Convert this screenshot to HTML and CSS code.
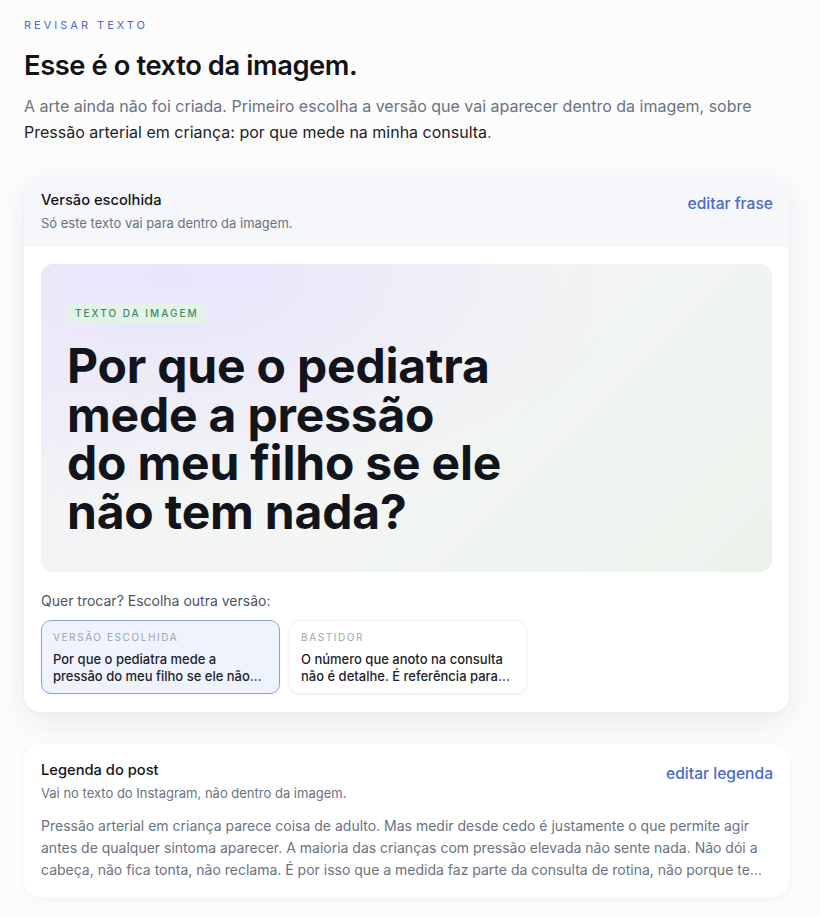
FILE: index.html
```html
<!DOCTYPE html>
<html lang="pt-BR">
<head>
  <meta charset="UTF-8">
  <title>Revisar texto</title>
  <link rel="stylesheet" href="styles.css">
</head>
<body>

<main class="page">
  <div class="eyebrow">REVISAR TEXTO</div>
  <h1>Esse é o texto da imagem.</h1>
  <p class="intro">A arte ainda não foi criada. Primeiro escolha a versão que vai aparecer dentro da imagem, sobre <span class="topic">Pressão arterial em criança: por que mede na minha consulta</span>.</p>

  <section class="card card-main">
    <div class="card-head">
      <div>
        <div class="card-title">Versão escolhida</div>
        <div class="card-sub">Só este texto vai para dentro da imagem.</div>
      </div>
      <a class="edit-link" href="#">editar frase</a>
    </div>

    <div class="card-body">
      <div class="preview">
        <span class="chip">TEXTO DA IMAGEM</span>
        <div class="preview-text">Por que o pediatra<br>mede a pressão<br>do meu filho se ele<br>não tem nada?</div>
      </div>

      <div class="switch-label">Quer trocar? Escolha outra versão:</div>
      <div class="options">
        <div class="option selected">
          <div class="option-tag">VERSÃO ESCOLHIDA</div>
          <div class="option-text">Por que o pediatra mede a pressão do meu filho se ele não tem nada?</div>
        </div>
        <div class="option">
          <div class="option-tag">BASTIDOR</div>
          <div class="option-text">O número que anoto na consulta não é detalhe. É referência para acompanhar o crescimento.</div>
        </div>
      </div>
    </div>
  </section>

  <section class="card card-caption">
    <div class="caption-head">
      <div>
        <div class="card-title">Legenda do post</div>
        <div class="card-sub">Vai no texto do Instagram, não dentro da imagem.</div>
      </div>
      <a class="edit-link" href="#">editar legenda</a>
    </div>
    <p class="caption-text">Pressão arterial em criança parece coisa de adulto. Mas medir desde cedo é justamente o que permite agir antes de qualquer sintoma aparecer. A maioria das crianças com pressão elevada não sente nada. Não dói a cabeça, não fica tonta, não reclama. É por isso que a medida faz parte da consulta de rotina, não porque tem algo errado com o seu filho.</p>
  </section>
</main>

</body>
</html>
```

FILE: styles.css
```css
body {
  margin: 0;
  background: #fcfcfd;
  font-family: Inter, "Noto Sans", Arial, sans-serif;
  color: #111827;
}

.page {
  padding: 18px 24px 20px;
  max-width: 765px;
}

.eyebrow {
  font-size: 11px;
  letter-spacing: 3px;
  color: #4a6bc8;
  line-height: 14px;
}

h1 {
  margin: 16px 0 0;
  font-size: 27.3px;
  font-weight: 600;
  letter-spacing: -0.4px;
  line-height: 36px;
  color: #111318;
}

.intro {
  margin: 9px 0 0;
  font-size: 16px;
  line-height: 26px;
  color: #6b7280;
}

.topic {
  color: #1f2328;
}

/* Cards */
.card {
  background: #fff;
  border-radius: 16px;
}

.card-main {
  margin-top: 32px;
  overflow: hidden;
  box-shadow: 0 10px 30px rgba(30, 40, 70, 0.08), 0 1px 3px rgba(30, 40, 70, 0.04);
}

.card-head {
  background: #f6f7fa;
  padding: 14px 16px 16px 17px;
  display: flex;
  justify-content: space-between;
  align-items: flex-start;
}

.card-title {
  font-size: 14.7px;
  font-weight: 500;
  line-height: 18px;
  color: #111318;
}

.card-sub {
  margin-top: 6px;
  font-size: 13px;
  line-height: 16px;
  color: #6b7280;
}

.edit-link {
  font-size: 15.6px;
  font-weight: 500;
  color: #4a6bc8;
  text-decoration: none;
  margin-top: 3px;
}

.card-body {
  padding: 17px 17px 18px;
}

.preview {
  border-radius: 12px;
  padding: 37px 26px 36px;
  background:
    radial-gradient(ellipse at 18% 5%, rgba(233, 228, 252, 0.95) 0%, rgba(233, 228, 252, 0) 55%),
    linear-gradient(135deg, #f2f1f8 0%, #f3f6f3 50%, #edf2ed 100%);
}

.chip {
  display: inline-block;
  background: #e4f3e8;
  color: #3f8b5d;
  font-size: 10px;
  font-weight: 500;
  letter-spacing: 2px;
  line-height: 20px;
  padding: 0 8px;
  border-radius: 6px;
}

.preview-text {
  margin-top: 19px;
  font-size: 48px;
  font-weight: 700;
  line-height: 48.5px;
  letter-spacing: -0.2px;
  color: #12141b;
}

.switch-label {
  margin-top: 20px;
  font-size: 14px;
  line-height: 18px;
  color: #4b5563;
}

.options {
  margin-top: 10px;
  display: flex;
  gap: 9px;
}

.option {
  width: 238px;
  box-sizing: border-box;
  padding: 10px 11px 8px;
  border-radius: 10px;
  border: 1px solid #f1f2f5;
  box-shadow: 0 1px 3px rgba(30, 40, 70, 0.05);
  background: #fff;
}

.option.selected {
  width: 239px;
  background: #eef3fe;
  border-color: #8d9fe0;
}

.option-tag {
  font-size: 10px;
  letter-spacing: 1.6px;
  color: #9ca3af;
  line-height: 12px;
}

.option-text {
  margin-top: 8px;
  font-size: 13px;
  font-weight: 500;
  line-height: 17px;
  color: #1f2328;
  display: -webkit-box;
  -webkit-line-clamp: 2;
  -webkit-box-orient: vertical;
  overflow: hidden;
}

.card-caption {
  margin-top: 32px;
  padding: 17px 16px 16px 17px;
  box-shadow: 0 2px 10px rgba(30, 40, 70, 0.04);
}

.caption-head {
  display: flex;
  justify-content: space-between;
  align-items: flex-start;
}

.caption-text {
  margin: 14px 0 0;
  font-size: 14px;
  line-height: 22px;
  color: #6b7280;
  display: -webkit-box;
  -webkit-line-clamp: 3;
  -webkit-box-orient: vertical;
  overflow: hidden;
}
```
